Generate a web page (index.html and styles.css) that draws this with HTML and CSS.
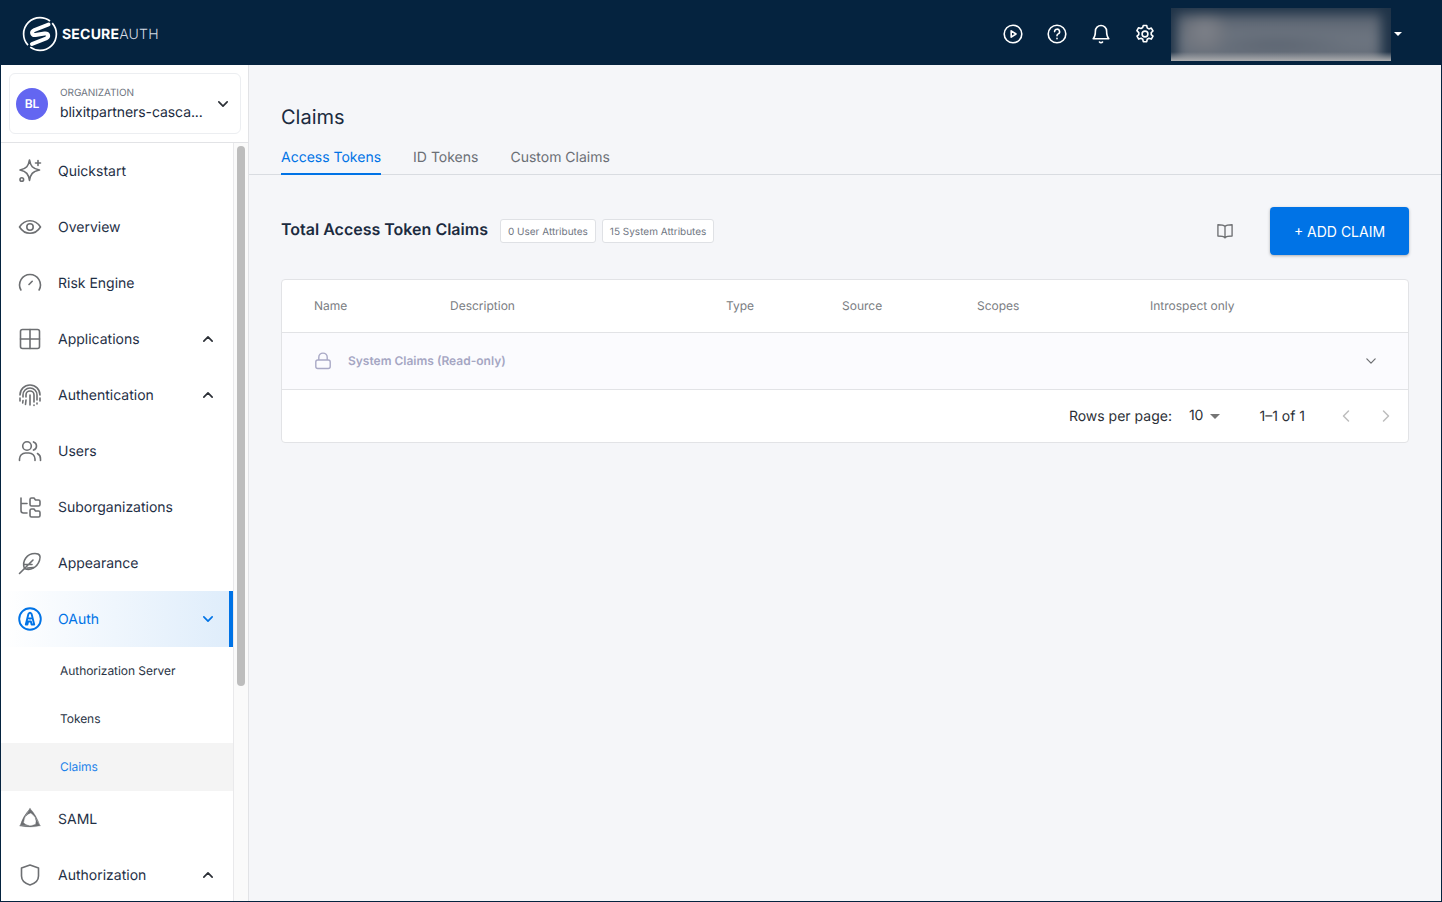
FILE: index.html
```html
<!DOCTYPE html>
<html lang="en">
<head>
    <meta charset="UTF-8">
    <meta name="viewport" content="width=device-width, initial-scale=1.0">
    <title>Claims</title>
    <link rel="stylesheet" href="styles.css">
</head>
<body>
    <header class="topbar">
        <div class="brand">
            <svg class="brand-logo" viewBox="0 0 36 36" fill="none" stroke="#fff">
                <circle cx="18" cy="18" r="16.400" stroke-width="1.700" stroke-dasharray="36 3 48.500 3 12.500"/>
                <path d="M26.500 8.500L12.500 14C8.500 16 10 19.500 13.500 19L22.500 17.500C26.500 17 27.500 20.500 24 22.500L10 28" stroke-width="4" stroke-linecap="round" stroke-linejoin="round"/>
            </svg>
            <span class="brand-name"><b>SECURE</b>AUTH</span>
        </div>
        <div class="top-actions">
            <svg class="top-icon" viewBox="0 0 24 24"><circle cx="12" cy="12" r="8.800"/><path d="M10.200 8.800v6.400l4.800-3.200z"/></svg>
            <svg class="top-icon" viewBox="0 0 24 24"><circle cx="12" cy="12" r="8.800"/><path d="M9.600 9.600a2.500 2.500 0 1 1 3.600 2.300c-.8.400-1.200 1-1.200 1.800"/><path d="M12 16.400v.3"/></svg>
            <svg class="top-icon" viewBox="0 0 24 24"><path d="M12 3.500a5.600 5.600 0 0 0-5.600 5.600c0 4-.9 6.200-2.200 7.600h15.600c-1.300-1.400-2.200-3.600-2.200-7.600A5.600 5.600 0 0 0 12 3.500z"/><path d="M10.500 20a1.800 1.800 0 0 0 3 0"/></svg>
            <svg class="top-icon" viewBox="0 0 24 24"><circle cx="12" cy="12" r="2.900"/><path d="M10.300 3.500h3.400l.5 2.400 1.700 1 2.400-.8 1.700 2.900-1.800 1.600v2l1.800 1.600-1.700 2.900-2.400-.8-1.700 1-.5 2.400h-3.400l-.5-2.400-1.700-1-2.400.8-1.700-2.900 1.800-1.600v-2L3.900 8.600l1.700-2.900 2.400.8 1.700-1z"/></svg>
        </div>
        <div class="user-blur"><div class="user-blur-inner"></div></div>
        <span class="user-caret"></span>
    </header>

    <div class="layout">
        <aside class="sidebar">
            <div class="org-wrap">
                <div class="org-card">
                    <span class="org-avatar">BL</span>
                    <div class="org-text">
                        <span class="org-label">ORGANIZATION</span>
                        <span class="org-name">blixitpartners-casca...</span>
                    </div>
                    <svg class="chev chev-dark" viewBox="0 0 24 24"><path d="M7 9.500l5 5 5-5"/></svg>
                </div>
            </div>
            <div class="side-scroll">
                <nav class="nav">
                    <a class="nav-item">
                        <svg class="nav-icon" viewBox="0 0 24 24"><path d="M11.500 2C12.500 8 14.500 10.500 21.500 12 14.500 13.500 12.500 16 11.500 22.500 10.500 16 8.500 13.500 2 12 8.500 10.500 10.500 8 11.500 2z" transform="translate(0 -1)"/><path d="M20 1.500v5M17.500 4h5"/><circle cx="3.800" cy="20.500" r="1.800"/></svg>
                        <span>Quickstart</span>
                    </a>
                    <a class="nav-item">
                        <svg class="nav-icon" viewBox="0 0 24 24"><path d="M1.500 12C4.200 7.800 7.800 5.700 12 5.700s7.800 2.100 10.500 6.300c-2.700 4.200-6.300 6.300-10.500 6.300S4.200 16.200 1.500 12z"/><circle cx="12" cy="12" r="3.200"/></svg>
                        <span>Overview</span>
                    </a>
                    <a class="nav-item">
                        <svg class="nav-icon" viewBox="0 0 24 24"><path d="M2.900 19A10.400 10.400 0 1 1 21.100 19"/><path d="M11 13.500l3.200-3.200"/></svg>
                        <span>Risk Engine</span>
                    </a>
                    <a class="nav-item">
                        <svg class="nav-icon" viewBox="0 0 24 24"><rect x="2.500" y="2.500" width="19" height="19" rx="2"/><path d="M12 2.500v19M2.500 12h19"/></svg>
                        <span>Applications</span>
                        <svg class="chev chev-dark nav-chev" viewBox="0 0 24 24"><path d="M7 14.500l5-5 5 5"/></svg>
                    </a>
                    <a class="nav-item">
                        <svg class="nav-icon" viewBox="0 0 24 24"><path d="M2 12a10 10 0 0 1 20 0"/><path d="M5 14v-2a7 7 0 0 1 14 0v5"/><path d="M8 14v-2a4 4 0 0 1 8 0v7"/><path d="M2 15v3M22 15v3M5 17.500l-.3 2.500M8 17l-.5 4.500M12 12v10M16 22v.5M19 20v1"/></svg>
                        <span>Authentication</span>
                        <svg class="chev chev-dark nav-chev" viewBox="0 0 24 24"><path d="M7 14.500l5-5 5 5"/></svg>
                    </a>
                    <a class="nav-item">
                        <svg class="nav-icon" viewBox="0 0 24 24"><circle cx="9" cy="7" r="4.300"/><path d="M1.500 21.500v-1.500a6 6 0 0 1 6-6h3.500a6 6 0 0 1 6 6v1.500"/><path d="M15.500 2.900a4.300 4.300 0 0 1 0 8.200M19.500 14.500a6 6 0 0 1 3 5.500v1.500"/></svg>
                        <span>Users</span>
                    </a>
                    <a class="nav-item">
                        <svg class="nav-icon" viewBox="0 0 24 24"><path d="M3 3v12.500a2.500 2.500 0 0 0 2.500 2.500H9M3 8.500h6"/><path d="M12 4.500a1.500 1.500 0 0 1 1.500-1.500h2.500l1.500 2h3a1.500 1.500 0 0 1 1.500 1.500v3a1.500 1.500 0 0 1-1.500 1.500h-7A1.500 1.500 0 0 1 12 9.500z"/><path d="M12 15.500a1.500 1.500 0 0 1 1.500-1.500h2.500l1.500 2h3a1.500 1.500 0 0 1 1.500 1.500v3a1.500 1.500 0 0 1-1.500 1.500h-7a1.500 1.500 0 0 1-1.500-1.500z"/></svg>
                        <span>Suborganizations</span>
                    </a>
                    <a class="nav-item">
                        <svg class="nav-icon" viewBox="0 0 24 24"><path d="M6.500 17.500C3.500 10 9 2.500 17 2.500c5 0 6 3 4.500 7C19 16.500 12.500 20 6.500 17.500z"/><path d="M1.500 22.500L15 9M6 13.500h8M9.500 17l6-.5"/></svg>
                        <span>Appearance</span>
                    </a>
                    <a class="nav-item nav-item-active">
                        <svg class="nav-icon" viewBox="0 0 24 24"><circle cx="12" cy="12" r="10.800"/><path d="M7.800 17.500l2.600-10.500q1.600-2.500 3.200 0l2.600 10.500h-2.600l-.7-3h-2.800l-.7 3zM11 11.500h2"/></svg>
                        <span>OAuth</span>
                        <svg class="chev nav-chev" viewBox="0 0 24 24"><path d="M7 9.500l5 5 5-5"/></svg>
                    </a>
                    <a class="sub-item"><span>Authorization Server</span></a>
                    <a class="sub-item"><span>Tokens</span></a>
                    <a class="sub-item sub-item-active"><span>Claims</span></a>
                    <a class="nav-item">
                        <svg class="nav-icon nav-icon-filled" viewBox="0 0 24 24">
                            <path d="M12 1.500L7.500 9.500Q10 6.500 12.800 6Q18 9.500 22 19Q18.500 8 12 1.500z"/>
                            <path d="M12 1.500L7.500 9.500Q10 6.500 12.800 6Q18 9.500 22 19Q18.500 8 12 1.500z" transform="rotate(120 12 13)"/>
                            <path d="M12 1.500L7.500 9.500Q10 6.500 12.800 6Q18 9.500 22 19Q18.500 8 12 1.500z" transform="rotate(240 12 13)"/>
                        </svg>
                        <span>SAML</span>
                    </a>
                    <a class="nav-item">
                        <svg class="nav-icon" viewBox="0 0 24 24"><path d="M12 2l8.500 3v8c0 4.500-3.500 7.500-8.500 9-5-1.500-8.500-4.500-8.500-9V5z"/></svg>
                        <span>Authorization</span>
                        <svg class="chev chev-dark nav-chev" viewBox="0 0 24 24"><path d="M7 14.500l5-5 5 5"/></svg>
                    </a>
                </nav>
                <div class="scrollbar"><div class="scroll-thumb"></div></div>
            </div>
        </aside>

        <main class="content">
            <div class="page-head">
                <h1>Claims</h1>
                <div class="tabs">
                    <a class="tab tab-active">Access Tokens</a>
                    <a class="tab">ID Tokens</a>
                    <a class="tab">Custom Claims</a>
                </div>
            </div>

            <div class="panel">
                <div class="panel-head">
                    <h2>Total Access Token Claims</h2>
                    <span class="chip">0 User Attributes</span>
                    <span class="chip">15 System Attributes</span>
                    <svg class="book-icon" viewBox="0 0 24 24"><path d="M12 6.500C10.500 5 8 4.500 3.500 4.500v13.500c4.500 0 7 .5 8.500 2 1.500-1.500 4-2 8.500-2V4.500C16 4.500 13.500 5 12 6.500zM12 6.500V21"/></svg>
                    <button class="add-btn">+ ADD CLAIM</button>
                </div>

                <div class="table-card">
                    <div class="table-head">
                        <span>Name</span>
                        <span>Description</span>
                        <span>Type</span>
                        <span>Source</span>
                        <span>Scopes</span>
                        <span>Introspect only</span>
                    </div>
                    <div class="group-row">
                        <svg class="lock-icon" viewBox="0 0 18 18"><rect x="1.800" y="8" width="14.400" height="8.500" rx="2"/><path d="M4.800 8V5.300a4.200 4.200 0 0 1 8.400 0V8"/></svg>
                        <span class="group-name">System Claims (Read-only)</span>
                        <svg class="chev group-chev" viewBox="0 0 24 24"><path d="M7 9.500l5 5 5-5"/></svg>
                    </div>
                    <div class="pager">
                        <span class="pager-label">Rows per page:</span>
                        <span class="pager-size">10</span>
                        <span class="pager-caret"></span>
                        <span class="pager-range">1–1 of 1</span>
                        <svg class="chev pager-arrow" viewBox="0 0 24 24"><path d="M15 6l-6 6 6 6"/></svg>
                        <svg class="chev pager-arrow" viewBox="0 0 24 24"><path d="M9 6l6 6-6 6"/></svg>
                    </div>
                </div>
            </div>
        </main>
    </div>
</body>
</html>
```

FILE: styles.css
```css
* {
    box-sizing: border-box;
}

html, body {
    height: 100%;
}

body {
    margin: 0;
    height: 902px;
    overflow: hidden;
    font-family: 'Inter', 'Liberation Sans', sans-serif;
    text-rendering: geometricPrecision;
    color: #1b2b40;
    background: #f5f6f9;
    display: flex;
    flex-direction: column;
    border-left: 1px solid #05233f;
    border-right: 1px solid #05233f;
    border-bottom: 1px solid #05233f;
}

/* top bar */
.topbar {
    height: 65px;
    margin: 0 -1px;
    flex-shrink: 0;
    background: #05233f;
    display: flex;
    align-items: center;
    position: relative;
}

.brand {
    display: flex;
    align-items: center;
    margin-left: 22px;
    margin-top: 2px;
    gap: 4px;
}

.brand-logo {
    width: 36px;
    height: 36px;
}

.brand-name {
    color: #d5dbe2;
    font-size: 14px;
    letter-spacing: 0.2px;
    font-weight: 300;
    margin-top: 1px;
}

.brand-name b {
    color: #fff;
    font-weight: 700;
}

.top-actions {
    margin-left: auto;
    margin-right: 14px;
    margin-top: 2px;
    display: flex;
    gap: 20px;
}

.top-icon {
    width: 24px;
    height: 24px;
    fill: none;
    stroke: #fff;
    stroke-width: 1.600;
    stroke-linecap: round;
    stroke-linejoin: round;
}

.user-blur {
    width: 220px;
    height: 53px;
    margin-top: 4px;
    overflow: hidden;
    background: #1f3348;
    position: relative;
}

.user-blur-inner {
    position: absolute;
    inset: 6px 10px -6px 6px;
    background:
        radial-gradient(circle at 28px 18px, #7f838c 0, #73777f 14px, transparent 24px),
        radial-gradient(ellipse 80px 8px at 100px 30px, #565f6c 0, transparent 100%),
        linear-gradient(#5a6370 0, #6e7681 45%, #626a76 100%);
    filter: blur(6px);
}

/* light strip at the bottom edge of the blurred block */
.user-blur::after {
    content: '';
    position: absolute;
    left: 0;
    right: 0;
    bottom: 0;
    height: 9px;
    background: linear-gradient(rgba(170, 171, 173, 0), #adaeb0);
}

.user-caret {
    margin: 2px 40px 0 3px;
    width: 0;
    height: 0;
    border-left: 4px solid transparent;
    border-right: 4px solid transparent;
    border-top: 4px solid #fff;
}

.layout {
    flex: 1;
    display: flex;
    min-height: 0;
}

/* sidebar */
.sidebar {
    width: 248px;
    flex-shrink: 0;
    background: #fff;
    border-right: 1px solid #e2e3e6;
    display: flex;
    flex-direction: column;
    min-height: 0;
}

.org-wrap {
    height: 78px;
    flex-shrink: 0;
    padding: 8px 7px 8px 8px;
    border-bottom: 1px solid #e2e3e6;
}

.org-card {
    height: 61px;
    border: 1px solid #eceef1;
    border-radius: 6px;
    display: flex;
    align-items: center;
    padding-left: 6px;
}

.org-avatar {
    width: 32px;
    height: 32px;
    border-radius: 50%;
    background: #6366f1;
    color: #fff;
    font-size: 12px;
    font-weight: 600;
    display: flex;
    align-items: center;
    justify-content: center;
    flex-shrink: 0;
}

.org-text {
    margin-left: 12px;
    display: flex;
    flex-direction: column;
    width: 150px;
    padding-top: 2px;
}

.org-label {
    font-size: 10px;
    color: #6f7682;
    line-height: 14px;
    letter-spacing: -0.1px;
}

.org-name {
    font-size: 14px;
    line-height: 20px;
    margin-top: 3px;
    letter-spacing: -0.08px;
    white-space: nowrap;
}

.chev {
    width: 20px;
    height: 20px;
    fill: none;
    stroke: #0073e6;
    stroke-width: 2;
    stroke-linecap: round;
    stroke-linejoin: round;
}

.chev-dark {
    stroke: #2b2f36;
}

.org-card .chev {
    margin-left: 3px;
}

.side-scroll {
    flex: 1;
    display: flex;
    min-height: 0;
    overflow: hidden;
}

.nav {
    width: 232px;
    flex-shrink: 0;
    display: flex;
    flex-direction: column;
}

.nav-item {
    height: 56px;
    flex-shrink: 0;
    display: flex;
    align-items: center;
    padding-left: 17px;
    font-size: 14px;
    color: #1f3046;
}

.nav-item span {
    line-height: 16px;
    margin-top: 2px;
}

.nav-icon {
    width: 24px;
    height: 24px;
    margin-right: 16px;
    flex-shrink: 0;
    fill: none;
    stroke: #6d6f72;
    stroke-width: 1.600;
    stroke-linecap: round;
    stroke-linejoin: round;
}

.nav-icon-filled {
    fill: #6d6f72;
    stroke-width: 0.300;
}

.nav-chev {
    margin-left: auto;
    margin-right: 15px;
}

.nav-item-active {
    color: #0073e6;
    background: linear-gradient(90deg, #fff 0, #dfedfb 100%);
    border-right: 4px solid #0073e6;
}

.nav-item-active .nav-icon {
    stroke: #0073e6;
    stroke-width: 1.900;
}

.nav-item-active .nav-chev {
    margin-right: 11px;
}

.sub-item {
    height: 48px;
    flex-shrink: 0;
    display: flex;
    align-items: center;
    padding-left: 59px;
    font-size: 12px;
    color: #2a3445;
}

.sub-item span {
    margin-bottom: 2px;
    letter-spacing: -0.05px;
}

.sub-item-active {
    background: #f4f4f4;
    color: #1d82ea;
}

.scrollbar {
    flex: 1;
    background: #fafafa;
    border-left: 1px solid #e9e9eb;
    padding: 3px 2px 0 3px;
}

.scroll-thumb {
    height: 540px;
    width: 8px;
    border-radius: 4px;
    background: #bdbdbd;
}

/* main area */
.content {
    flex: 1;
    min-width: 0;
}

.page-head {
    height: 110px;
    padding: 38px 32px 0;
    border-bottom: 1px solid #d9dce1;
}

h1 {
    margin: 0;
    font-size: 20px;
    font-weight: 400;
    line-height: 28px;
    color: #1b2b40;
}

.tabs {
    display: flex;
    gap: 32px;
    margin-top: 17px;
}

.tab {
    height: 27px;
    font-size: 14px;
    line-height: 20px;
    color: #6b6f75;
}

.tab-active {
    color: #0073e6;
    border-bottom: 2px solid #0073e6;
}

.panel {
    padding: 32px 32px 0;
}

.panel-head {
    height: 48px;
    display: flex;
    align-items: center;
}

h2 {
    margin: -4px 12px 0 0;
    font-size: 16px;
    font-weight: 600;
    color: #1b2b40;
}

.chip {
    height: 24px;
    padding: 1px 7px 0;
    margin-right: 6px;
    background: #fff;
    border: 1px solid #dfe1e5;
    border-radius: 3px;
    font-size: 10px;
    line-height: 22px;
    color: #6f7682;
    white-space: nowrap;
}

.book-icon {
    width: 20px;
    height: 20px;
    margin-left: auto;
    margin-right: 35px;
    fill: none;
    stroke: #6d6f72;
    stroke-width: 1.600;
    stroke-linejoin: round;
}

.add-btn {
    width: 139px;
    height: 48px;
    border: none;
    border-radius: 4px;
    background: #0073e6;
    color: #fff;
    font-family: inherit;
    font-size: 14px;
    box-shadow: 0 1px 3px rgba(0, 0, 0, 0.3);
}

.table-card {
    margin-top: 24px;
    height: 164px;
    background: #fff;
    border: 1px solid #e2e3e6;
    border-radius: 4px;
}

.table-head {
    height: 53px;
    display: grid;
    grid-template-columns: 136px 276px 116px 135px 173px 1fr;
    align-items: center;
    padding: 0 0 2px 32px;
    border-bottom: 1px solid #e2e3e6;
    font-size: 12px;
    color: #7a7d82;
}

.group-row {
    height: 57px;
    display: flex;
    align-items: center;
    padding-left: 32px;
    background: #fbfbfe;
    border-bottom: 1px solid #e2e3e6;
}

.lock-icon {
    width: 18px;
    height: 18px;
    fill: none;
    stroke: #a9a9c6;
    stroke-width: 1.400;
}

.group-name {
    margin-left: 16px;
    margin-bottom: 2px;
    font-size: 12px;
    font-weight: 600;
    color: #a5a6c3;
}

.group-chev {
    margin-left: auto;
    margin-right: 27px;
    width: 20px;
    height: 20px;
    stroke: #6d6f72;
    stroke-width: 1.500;
}

.pager {
    height: 52px;
    display: flex;
    align-items: center;
    justify-content: flex-end;
    font-size: 14px;
    color: #2b2f36;
    padding-right: 12px;
}

.pager span {
    line-height: 16px;
    margin-top: 2px;
}

.pager .pager-size {
    margin-left: 17px;
    margin-top: 0;
}

.pager .pager-caret {
    margin-left: 7px;
    margin-top: 0;
    width: 0;
    height: 0;
    border-left: 5px solid transparent;
    border-right: 5px solid transparent;
    border-top: 5px solid #757575;
}

.pager-range {
    margin-left: 39px;
    margin-right: 31px;
}

.pager-arrow {
    width: 20px;
    height: 20px;
    margin-left: 0;
    stroke: #bdbdbd;
    stroke-width: 1.800;
}

.pager-arrow + .pager-arrow {
    margin-left: 20px;
}
```
